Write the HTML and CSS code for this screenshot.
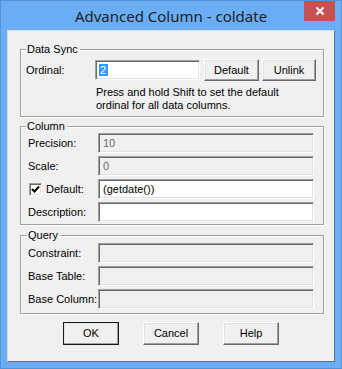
FILE: index.html
```html
<!DOCTYPE html>
<html>
<head>
<meta charset="utf-8">
<link rel="stylesheet" href="styles.css">
</head>
<body>
<div class="window">
  <div class="titlebar">
    <span class="title">Advanced Column - coldate</span>
    <button class="close" type="button" aria-label="Close">
      <svg width="10" height="10" viewBox="0 0 10 10"><path d="M1.5 1.5 L8.5 8.5 M8.5 1.5 L1.5 8.5" stroke="#fff" stroke-width="2" fill="none"/></svg>
    </button>
  </div>
  <div class="client">
    <fieldset class="group sync">
      <legend>Data Sync</legend>
      <div class="ordinal-row">
        <span class="lbl ord-lbl">Ordinal:</span>
        <div class="field ordinal"><span class="sel">2</span></div>
        <button class="btn btn-default" type="button">Default</button>
        <button class="btn btn-unlink" type="button">Unlink</button>
      </div>
      <p class="hint">Press and hold Shift to set the default<br>ordinal for all data columns.</p>
    </fieldset>

    <fieldset class="group column">
      <legend>Column</legend>
      <div class="form">
        <span class="lbl">Precision:</span>
        <div class="field disabled">10</div>
        <span class="lbl">Scale:</span>
        <div class="field disabled">0</div>
        <span class="lbl check-lbl"><span class="check"><svg width="9" height="9" viewBox="0 0 9 9"><path d="M1 4 L3.5 6.5 L8 1.5" stroke="#000" stroke-width="2" fill="none"/></svg></span>Default:</span>
        <div class="field">(getdate())</div>
        <span class="lbl">Description:</span>
        <div class="field"></div>
      </div>
    </fieldset>

    <fieldset class="group query">
      <legend>Query</legend>
      <div class="form">
        <span class="lbl">Constraint:</span>
        <div class="field disabled"></div>
        <span class="lbl">Base Table:</span>
        <div class="field disabled"></div>
        <span class="lbl">Base Column:</span>
        <div class="field disabled"></div>
      </div>
    </fieldset>

    <div class="actions">
      <button class="btn btn-ok" type="button">OK</button>
      <button class="btn btn-act" type="button">Cancel</button>
      <button class="btn btn-act" type="button">Help</button>
    </div>
  </div>
</div>
</body>
</html>
```
FILE: styles.css
```css
html, body {
  margin: 0;
  padding: 0;
  background: #6badf4;
}
.window {
  width: 342px;
  height: 369px;
  box-sizing: border-box;
  background: #6badf4;
  border: 1px solid #5593d8;
  display: flex;
  flex-direction: column;
  font-family: "Liberation Sans", Arial, sans-serif;
  font-size: 11px;
  line-height: 13px;
  color: #000;
}
.titlebar {
  height: 29px;
  display: grid;
  grid-template-columns: 1fr auto 1fr;
  align-items: start;
}
.title {
  grid-column: 2;
  font-family: "Noto Sans", "Open Sans", sans-serif;
  font-size: 15px;
  line-height: 20px;
  margin-top: 5px;
  color: #1e1e1e;
}
.close {
  grid-column: 3;
  justify-self: end;
  width: 31px;
  height: 20px;
  margin: 0 6px 0 0;
  padding: 0;
  border: 0;
  background: #c75050;
  display: flex;
  align-items: center;
  justify-content: center;
}
.close svg { display: block; }
.client {
  margin: 0 6px;
  height: 332px;
  box-sizing: border-box;
  background: #f0f0f0;
  border: 1px solid;
  border-color: #d9d9d9 #5e6f86 #5e6f86 #d9d9d9;
  display: flex;
  flex-direction: column;
}
.group {
  margin: 0 0 0 12px;
  width: 304px;
  box-sizing: border-box;
  border: 1px solid #a0a0a0;
  box-shadow: 1px 1px 0 #fff, inset 1px 1px 0 #fff;
  padding: 0;
  min-width: 0;
}
.group legend {
  padding: 0 2px 0 1px;
  margin-left: 5px;
  line-height: 13px;
  background: #f0f0f0;
}
.query legend { margin-left: 6px; }
.sync {
  margin-top: 12px;
  padding: 3px 0 4px 0;
}
.sync > * { margin-left: 5px; }
.column {
  margin-top: 3px;
  padding: 0 0 2px 0;
}
.query {
  margin-top: 4px;
  padding: 1px 0 4px 0;
}
.column .form, .query .form { margin-left: 7px; }
.ordinal-row {
  display: flex;
  align-items: center;
  height: 22px;
}
.ord-lbl { width: 69px; }
.field {
  box-sizing: border-box;
  height: 20px;
  background: #fff;
  border: 1px solid;
  border-color: #a0a0a0 #fff #fff #a0a0a0;
  box-shadow: inset 1px 1px 0 #696969, inset -1px -1px 0 #e3e3e3;
  padding: 3px 0 0 4px;
  line-height: 13px;
  white-space: nowrap;
  overflow: hidden;
}
.field.disabled {
  background: #f0f0f0;
  color: #6d6d6d;
}
.ordinal { width: 105px; padding-left: 3px; }
.sel {
  background: #3399ff;
  color: #fff;
  padding: 0 2px 0 1px;
}
.btn {
  box-sizing: border-box;
  font-family: "Liberation Sans", Arial, sans-serif;
  font-size: 11px;
  line-height: 13px;
  color: #000;
  background: #f0f0f0;
  border: 1px solid;
  border-color: #fff #696969 #696969 #fff;
  box-shadow: inset -1px -1px 0 #a0a0a0, inset 1px 1px 0 #e3e3e3;
  padding: 0;
  margin: 0;
}
.btn-default { width: 55px; height: 22px; margin-left: 4px; }
.btn-unlink { width: 54px; height: 22px; margin-left: 3px; }
.sync > .hint {
  margin: 5px 0 0 75px;
}
.form {
  display: grid;
  grid-template-columns: 70px 216px;
  grid-auto-rows: 20px;
  row-gap: 3px;
  align-items: center;
}
.check-lbl {
  display: flex;
  align-items: center;
  margin-left: 1px;
}
.check {
  box-sizing: border-box;
  width: 13px;
  height: 13px;
  background: #fff;
  border: 1px solid;
  border-color: #a0a0a0 #fff #fff #a0a0a0;
  box-shadow: inset 1px 1px 0 #696969, inset -1px -1px 0 #e3e3e3;
  display: flex;
  align-items: center;
  justify-content: center;
  margin-right: 4px;
}
.check svg { display: block; }
.actions {
  display: flex;
  justify-content: center;
  gap: 24px;
  margin-top: 8px;
}
.btn-act, .btn-ok { width: 56px; height: 23px; }
.btn-ok {
  outline: 1px solid #1a1a1a;
  outline-offset: -1px;
  border-color: #fff #696969 #696969 #fff;
  box-shadow: inset -1px -1px 0 #a0a0a0, inset 1px 1px 0 #e3e3e3, inset 0 0 0 1px #222;
}
```
